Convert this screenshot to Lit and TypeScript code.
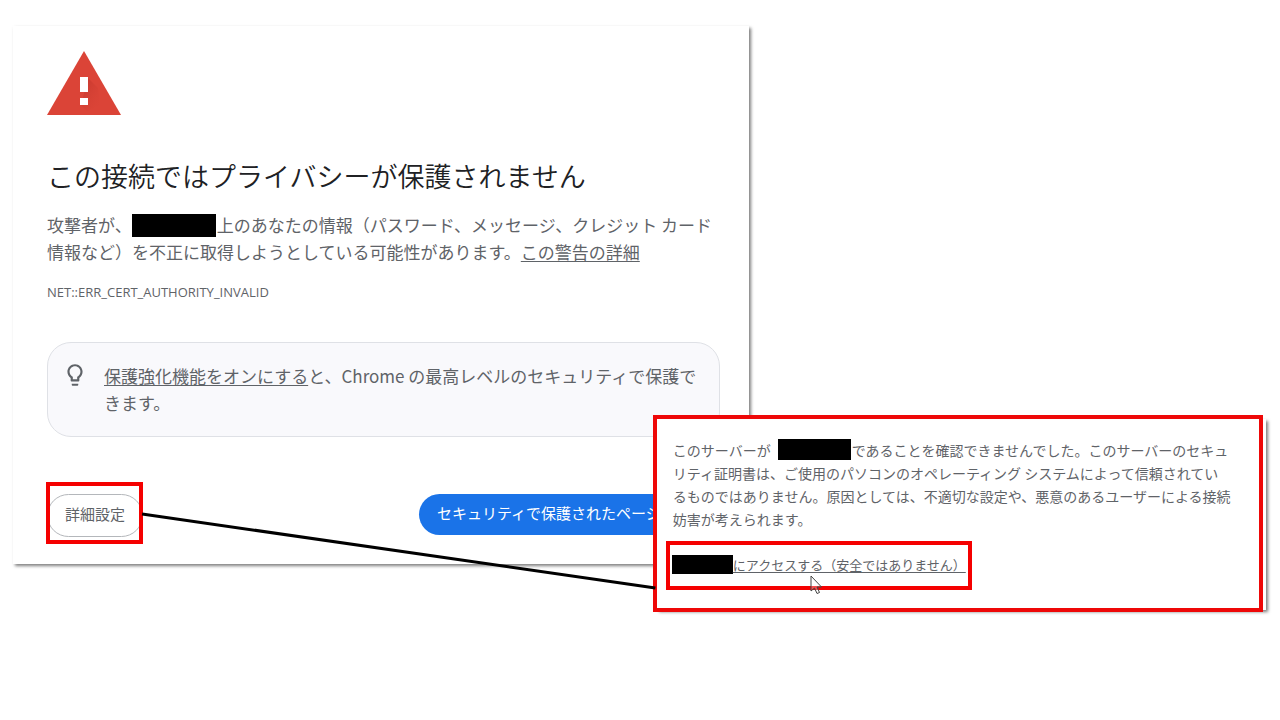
import { LitElement, html, css } from "lit";
import { customElement } from "lit/decorators.js";

const sheet = css`
  * { box-sizing: border-box; }
  a { color: inherit; text-decoration: underline; text-underline-offset: 2px; text-decoration-thickness: 1px; }
  p { margin: 0; }
  .masked { display: inline-block; background: #000; vertical-align: top; }
`;

@customElement("warning-card")
class WarningCard extends LitElement {
  static styles = [sheet, css`
    :host {
      display: flex; flex-direction: column; align-items: stretch;
      box-sizing: border-box; padding: 25px 29px 27px 34px;
      background: #fff; color: #5f6368;
      box-shadow: 2px 2px 3px 0 rgba(0, 0, 0, 0.5);
    }
    .alert { width: 74px; height: 64px; display: block; }
    h1 { margin: 43px 0 0; font-size: 27px; line-height: 36px; font-weight: 350; color: #202124; }
    .lead { margin-top: 17px; font-size: 17px; line-height: 27px; }
    .masked { width: 84px; height: 23px; margin: 3px 1px 0 0; }
    .code { margin-top: 17px; font-family: "Open Sans", "Noto Sans", sans-serif; font-size: 13px; line-height: 20px; }
    .tip {
      display: flex; gap: 16px; margin-top: 40px; padding: 19px 14px 20px;
      border: 1px solid #dfe1e6; border-radius: 24px; background: #f9f9fc;
      font-size: 17px; line-height: 27px;
    }
    .bulb { flex: none; width: 26px; height: 26px; fill: #5f6368; }
    .actions { display: flex; justify-content: space-between; align-items: flex-start; margin-top: 57px; }
    .marked { position: relative; display: flex; }
    .marked::after { content: ""; position: absolute; inset: -12px 0 -7px -1px; border: 4px solid #f50000; }
    button { font: inherit; font-size: 15px; line-height: 20px; border-radius: 22px; margin: 0; }
    .details { height: 43px; padding: 0 17px 4px; border: 1px solid #b4b7bb; background: #fff; color: #5f6368; }
    .back { width: 301px; height: 41px; padding: 0 18px 4px; border: 0; background: #1a73e8; color: #fff; text-align: left; white-space: nowrap; }
  `];

  render() {
    return html`
      <svg class="alert" viewBox="0 0 74 64" aria-hidden="true">
        <defs>
          <linearGradient id="fade" x1="0" y1="0" x2="1" y2="1">
            <stop offset="0" stop-color="#b83027" stop-opacity="0.7" />
            <stop offset="1" stop-color="#db4437" stop-opacity="0" />
          </linearGradient>
        </defs>
        <path d="M37 0 74 64H0z" fill="#db4437" />
        <path d="M41 27 51 37 53 54 40 60 34 54z" fill="url(#fade)" />
        <path d="M33 26h8v15h-8zM33 47h8v7h-8z" fill="#fff" />
      </svg>
      <h1>この接続ではプライバシーが保護されません</h1>
      <p class="lead">攻撃者が、<span class="masked"></span>上のあなたの情報（パスワード、メッセージ、クレジット カード情報など）を不正に取得しようとしている可能性があります。<a href="#">この警告の詳細</a></p>
      <p class="code">NET::ERR_CERT_AUTHORITY_INVALID</p>
      <section class="tip">
        <svg class="bulb" viewBox="0 0 24 24" aria-hidden="true">
          <path d="M9 21c0 .55.45 1 1 1h4c.55 0 1-.45 1-1v-1H9v1zm3-19C8.14 2 5 5.14 5 9c0 2.380 1.190 4.470 3 5.740V17c0 .55.45 1 1 1h6c.55 0 1-.45 1-1v-2.260c1.810-1.270 3-3.360 3-5.740 0-3.860-3.140-7-7-7zm2.850 11.100l-.85.6V16h-4v-2.300l-.85-.6C7.800 12.160 7 10.630 7 9c0-2.760 2.240-5 5-5s5 2.240 5 5c0 1.630-.8 3.160-2.150 4.100z" />
        </svg>
        <p><a href="#">保護強化機能をオンにする</a>と、Chrome の最高レベルのセキュリティで保護できます。</p>
      </section>
      <div class="actions">
        <div class="marked"><button class="details" type="button">詳細設定</button></div>
        <button class="back" type="button">セキュリティで保護されたページ</button>
      </div>
    `;
  }
}

@customElement("details-panel")
class DetailsPanel extends LitElement {
  static styles = [sheet, css`
    :host { display: block; color: #5f6368; isolation: isolate; }
    :host::before {
      content: ""; position: absolute; inset: 4px -3px 2px 4px; z-index: -1;
      background: #fff; box-shadow: 2px 2px 3px 0 rgba(0, 0, 0, 0.5);
    }
    .frame { padding: 20px 24px 18px 16px; border: 4px solid #ee0808; }
    .reason { font-size: 14px; line-height: 23px; }
    .host { width: 73px; height: 21px; margin: 0 1px 0 7px; }
    .proceed {
      position: relative; display: inline-flex; align-items: center;
      height: 49px; margin: 10px 0 0 -7px; padding: 0 2px 2px;
      border: 4px solid #f50000; font-size: 13px; line-height: 20px; white-space: nowrap;
      vertical-align: top;
    }
    .site { width: 61px; height: 19px; }
    .pointer { position: absolute; left: 140px; top: 30px; width: 13px; height: 20px; }
  `];

  render() {
    return html`
      <div class="frame">
        <p class="reason">このサーバーが<span class="masked host"></span>であることを確認できませんでした。このサーバーのセキュリティ証明書は、ご使用のパソコンのオペレーティング システムによって信頼されてい<br>るものではありません。原因としては、不適切な設定や、悪意のあるユーザーによる接続妨害が考えられます。</p>
        <div class="proceed">
          <span class="masked site"></span><a href="#">にアクセスする（安全ではありません）</a>
          <svg class="pointer" viewBox="0 0 13 20" aria-hidden="true">
            <path d="M1 1v15l3.500-3 2.500 5.500 2.500-1-2.500-5.500h4.500z" fill="#fff" fill-opacity="0.3" stroke="#444" stroke-width="1" />
          </svg>
        </div>
      </div>
    `;
  }
}

@customElement("app-root")
class AppRoot extends LitElement {
  static styles = css`
    :host {
      display: block; position: relative; box-sizing: border-box; min-height: 100vh;
      padding: 26px 0 0 13px; background: #fff;
      font-family: "Noto Sans CJK JP", "Noto Sans", sans-serif;
    }
    warning-card { width: 57.5vw; }
    details-panel { position: absolute; top: 415px; left: 51%; right: 17px; }
    .connector { position: absolute; inset: 0; width: 100%; height: 100%; pointer-events: none; }
  `;

  render() {
    return html`
      <warning-card></warning-card>
      <details-panel></details-panel>
      <svg class="connector" aria-hidden="true">
        <line x1="11.100%" y1="514" x2="51.200%" y2="588" stroke="#000" stroke-width="3" />
      </svg>
    `;
  }
}
